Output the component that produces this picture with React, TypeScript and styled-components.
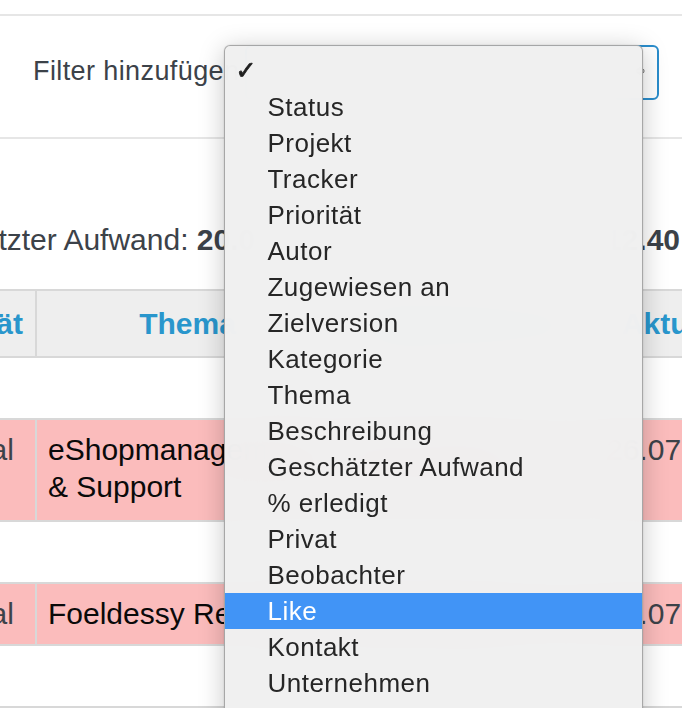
import React from "react";
import styled, { createGlobalStyle } from "styled-components";

const GlobalStyle = createGlobalStyle`
  html, body { margin: 0; padding: 0; background: #fff; }
  body { font-family: "Liberation Sans", Arial, sans-serif; }
`;

const Page = styled.div`
  width: 682px;
  overflow-x: clip;
  padding-top: 14px;
  color: #3c4249;
  font-size: 30px;
`;

const FilterBox = styled.section`
  display: flex;
  align-items: center;
  gap: 6px;
  border-top: 2px solid #e6e6e6;
  border-bottom: 2px solid #e6e6e6;
  padding: 29px 23px 37px 33px;
`;

const FilterLabel = styled.span`
  font-size: 27px;
  letter-spacing: 0.4px;
  white-space: nowrap;
  line-height: 32px;
  margin-top: -4px;
`;

const SelectWrap = styled.div`
  position: relative;
  flex: 1;
  height: 55px;
`;

const SelectBox = styled.div`
  height: 100%;
  box-sizing: border-box;
  border: 2px solid #2a8dcc;
  border-radius: 6px;
  background: #fff;
  display: flex;
  align-items: center;
  justify-content: flex-end;
  padding: 0 12px 4px 0;
`;

const Menu = styled.ul`
  position: absolute;
  z-index: 10;
  top: 0;
  left: -21px;
  width: 419px;
  box-sizing: border-box;
  margin: 0;
  padding: 7px 0 8px;
  list-style: none;
  background: rgba(240, 240, 240, 0.975);
  backdrop-filter: blur(24px);
  border: 1px solid rgba(0, 0, 0, 0.3);
  border-radius: 6px;
  box-shadow: 0 4px 26px rgba(0, 0, 0, 0.22), 0 0 2px rgba(0, 0, 0, 0.15);
  font-size: 26px;
  letter-spacing: 0.5px;
`;

const MenuItem = styled.li<{ $active?: boolean }>`
  display: grid;
  grid-template-columns: 42px 1fr;
  height: 36px;
  line-height: 36px;
  white-space: nowrap;
  background: ${(p) => (p.$active ? "#4194f6" : "transparent")};
  color: ${(p) => (p.$active ? "#ffffff" : "#262626")};
`;

const Check = styled.span`
  font-family: "DejaVu Sans", sans-serif;
  font-size: 25px;
  font-weight: 700;
  padding-left: 10px;
  color: #1e1e1e;
  -webkit-text-stroke: 0.8px #1e1e1e;
`;

const Totals = styled.div`
  display: flex;
  justify-content: space-between;
  margin: 82px 0 31px;
  padding-right: 2px;
  line-height: 37px;
  white-space: nowrap;
`;

const TotalsItem = styled.span<{ $lead?: boolean }>`
  margin-left: ${(p) => (p.$lead ? "-105px" : "0")};
  b { font-weight: 700; }
`;

const Table = styled.div`
  margin-left: -104px;
  width: 916px;
  border-top: 2px solid #d8d8d8;
`;

const Row = styled.div<{ $tone: "head" | "pink"; $minHeight?: number }>`
  display: grid;
  grid-template-columns: 139px 303px 255px 219px;
  min-height: ${(p) => p.$minHeight ?? 0}px;
  border-bottom: 2px solid #d8d8d8;
  background: ${(p) => (p.$tone === "head" ? "#eeeeee" : "#fbbcbc")};
`;

const BlankRow = styled.div`
  height: 60px;
  border-bottom: 2px solid #d8d8d8;
  background: #fff;
`;

const Cell = styled.div<{ $align?: "left" | "center"; $ink?: "dark" | "muted" }>`
  padding: 11px 11px;
  line-height: 37px;
  text-align: ${(p) => p.$align ?? "left"};
  color: ${(p) => (p.$ink === "dark" ? "#0a0a0a" : "#3c4249")};
  white-space: nowrap;
  align-self: stretch;
  & + & { border-left: 2px solid #d8d8d8; }
`;

const HeadCell = styled.div`
  padding: 14px 11px;
  line-height: 37px;
  text-align: center;
  color: #2996cc;
  font-weight: 700;
  white-space: nowrap;
  & + & { border-left: 2px solid #d8d8d8; }
`;

const menuItems = [
  "Status",
  "Projekt",
  "Tracker",
  "Priorität",
  "Autor",
  "Zugewiesen an",
  "Zielversion",
  "Kategorie",
  "Thema",
  "Beschreibung",
  "Geschätzter Aufwand",
  "% erledigt",
  "Privat",
  "Beobachter",
  "Like",
  "Kontakt",
  "Unternehmen",
  "Aktualisiert",
  "Angelegt",
];

const SelectArrows = () => (
  <svg width="10" height="10" viewBox="0 0 10 10" aria-hidden="true">
    <polygon points="0,4.4 5,0.6 10,4.4" fill="#555" />
    <polygon points="0,5.6 10,5.6 5,9.4" fill="#555" />
  </svg>
);

export default function App() {
  return (
    <>
      <GlobalStyle />
      <Page>
        <FilterBox>
          <FilterLabel>Filter hinzufügen</FilterLabel>
          <SelectWrap>
            <SelectBox>
              <SelectArrows />
            </SelectBox>
            <Menu>
              <MenuItem>
                <Check>✓</Check>
                <span />
              </MenuItem>
              {menuItems.map((m) => (
                <MenuItem key={m} $active={m === "Like"}>
                  <span />
                  <span>{m}</span>
                </MenuItem>
              ))}
            </Menu>
          </SelectWrap>
        </FilterBox>

        <Totals>
          <TotalsItem $lead>
            Geschätzter Aufwand: <b>20.00</b>
          </TotalsItem>
          <TotalsItem>
            Aufgewendete Zeit: <b>12.40</b>
          </TotalsItem>
        </Totals>

        <Table>
          <Row $tone="head">
            <HeadCell>Priorität</HeadCell>
            <HeadCell>Thema</HeadCell>
            <HeadCell>Zugewiesen an</HeadCell>
            <HeadCell>Aktualisiert</HeadCell>
          </Row>
          <BlankRow />
          <Row $tone="pink" $minHeight={100}>
            <Cell $align="center">Normal</Cell>
            <Cell $ink="dark">
              eShopmanagement
              <br />& Support
            </Cell>
            <Cell>Max Berger</Cell>
            <Cell>26.07.2018 09:41</Cell>
          </Row>
          <BlankRow />
          <Row $tone="pink" $minHeight={60}>
            <Cell $align="center">Normal</Cell>
            <Cell $ink="dark">Foeldessy Relaunch</Cell>
            <Cell>Max Berger</Cell>
            <Cell>24.07.2018 16:12</Cell>
          </Row>
          <BlankRow />
        </Table>
      </Page>
    </>
  );
}
